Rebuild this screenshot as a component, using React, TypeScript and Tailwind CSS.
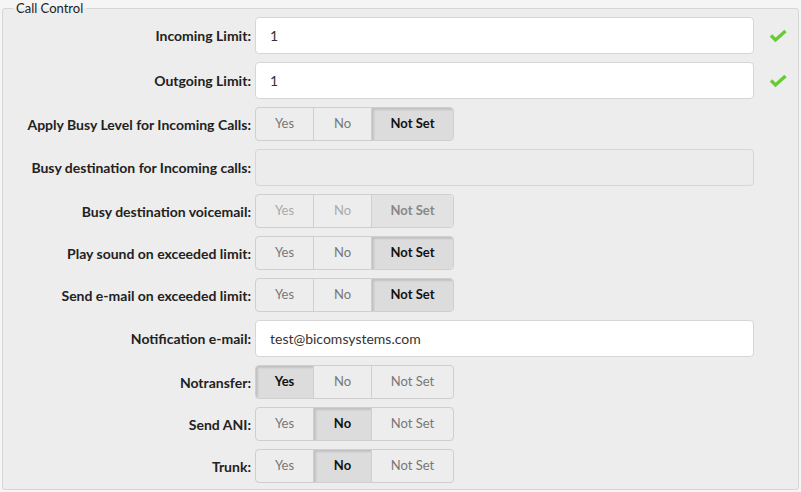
import React from 'react';

type Choice = 'Yes' | 'No' | 'Not Set';

type Row =
  | { kind: 'input'; label: string; value: string; check?: boolean; disabled?: boolean }
  | { kind: 'toggle'; label: string; value: Choice; disabled?: boolean };

const rows: Row[] = [
  { kind: 'input', label: 'Incoming Limit:', value: '1', check: true },
  { kind: 'input', label: 'Outgoing Limit:', value: '1', check: true },
  { kind: 'toggle', label: 'Apply Busy Level for Incoming Calls:', value: 'Not Set' },
  { kind: 'input', label: 'Busy destination for Incoming calls:', value: '', disabled: true },
  { kind: 'toggle', label: 'Busy destination voicemail:', value: 'Not Set', disabled: true },
  { kind: 'toggle', label: 'Play sound on exceeded limit:', value: 'Not Set' },
  { kind: 'toggle', label: 'Send e-mail on exceeded limit:', value: 'Not Set' },
  { kind: 'input', label: 'Notification e-mail:', value: 'test@bicomsystems.com' },
  { kind: 'toggle', label: 'Notransfer:', value: 'Yes' },
  { kind: 'toggle', label: 'Send ANI:', value: 'No' },
  { kind: 'toggle', label: 'Trunk:', value: 'No' },
];

function CheckIcon() {
  return (
    <svg width="18" height="14" viewBox="0 0 18 14" className="ml-[15px]">
      <path d="M2 6.5 L6.5 11 L16.5 2" fill="none" stroke="#66cc33" strokeWidth="3.4" strokeLinejoin="miter" />
    </svg>
  );
}

function Toggle({ value, disabled }: { value: Choice; disabled?: boolean }) {
  const opts: { name: Choice; w: string }[] = [
    { name: 'Yes', w: 'w-[57px]' },
    { name: 'No', w: 'w-[58px]' },
    { name: 'Not Set', w: 'w-[82px]' },
  ];
  return (
    <div className="flex h-[34px] rounded-[4px] border border-[#cfcfcf] overflow-hidden">
      {opts.map((o, i) => {
        const active = o.name === value;
        let cls = disabled ? 'text-[#aaaaaa]' : 'text-[#777777]';
        if (active) {
          cls = disabled
            ? 'bg-[#e2e2e2] text-[#888888] font-bold'
            : 'bg-[#dcdcdc] text-[#111111] font-bold shadow-[inset_2px_2px_2px_rgba(0,0,0,0.12)]';
        }
        return (
          <div
            key={o.name}
            className={`${o.w} flex items-center justify-center text-[13px] ${i > 0 ? 'border-l border-[#cfcfcf]' : ''} ${cls}`}
          >
            {o.name}
          </div>
        );
      })}
    </div>
  );
}

export default function App() {
  return (
    <div className="w-[801px] h-[492px] bg-[#f5f5f5] pt-px" style={{ fontFamily: 'Lato, "Open Sans", sans-serif' }}>
      <fieldset className="mx-[2px] h-[489px] border border-[#d6d6d6] rounded-[3px] bg-[#ededed] pl-0 pt-[2px]">
        <legend className="ml-[10px] px-[3px] text-[13px] leading-[14px] text-[#222222]">Call Control</legend>
        <div className="flex flex-col gap-[8px]">
          {rows.map((r) => (
            <div key={r.label} className="flex items-center">
              <div className="w-[252px] pr-[4px] text-right text-[14px] font-bold text-[#222222]">{r.label}</div>
              {r.kind === 'input' ? (
                <>
                  <div
                    className={`w-[499px] h-[37px] rounded-[4px] border border-[#d6d6d6] flex items-center px-[14px] text-[14px] text-[#333333] ${
                      r.disabled ? 'bg-[#ececec]' : 'bg-white'
                    }`}
                  >
                    {r.value}
                  </div>
                  {r.check && <CheckIcon />}
                </>
              ) : (
                <Toggle value={r.value} disabled={r.disabled} />
              )}
            </div>
          ))}
        </div>
      </fieldset>
    </div>
  );
}
